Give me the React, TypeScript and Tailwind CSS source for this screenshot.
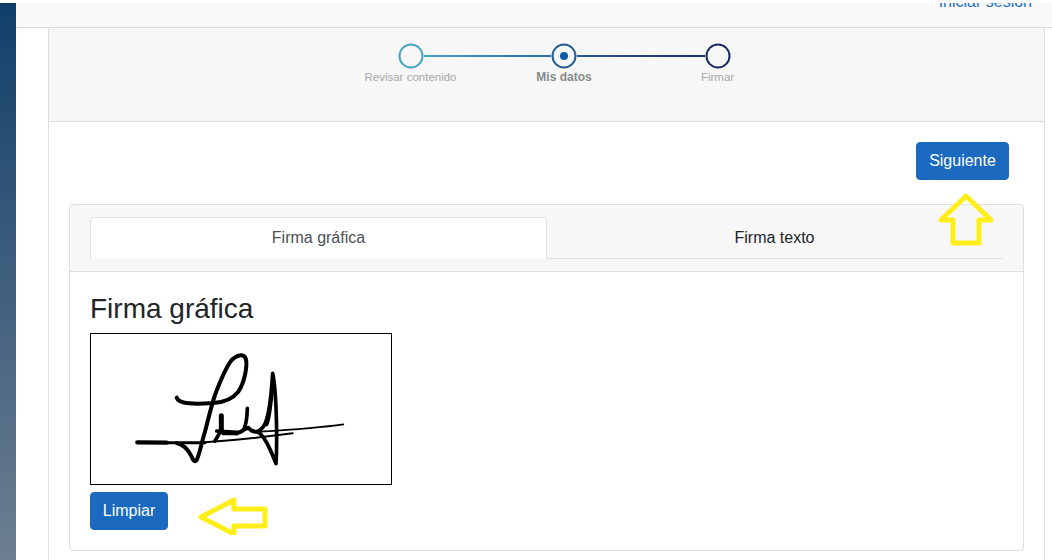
import React from "react";

function Sig() {
  return (
    <svg width="300" height="150" viewBox="33 27 900 450" className="block" fill="none" stroke="#000" strokeLinecap="round" strokeLinejoin="round">
      <path strokeWidth="12" d="M290 218 C296 238 345 238 400 234 C430 232 455 225 475 200 C495 170 503 120 497 100 C490 85 470 90 455 105 C435 130 420 170 405 210 C395 240 385 280 375 320 C365 350 360 385 350 405 C345 412 340 408 335 395 C325 375 310 358 290 354" />
      <path strokeWidth="13" d="M172 352 L260 353" />
      <path strokeWidth="9" d="M260 353 L375 353" />
      <path strokeWidth="6" d="M375 352 C470 345 560 335 638 325" />
      <path strokeWidth="5" d="M540 320 C620 315 720 308 790 298" />
      <path strokeWidth="15" d="M424 272 L424 320" />
      <path strokeWidth="11" d="M410 318 L470 322 C490 325 500 310 502 250" />
      <path strokeWidth="11" d="M405 348 L418 325" />
      <path strokeWidth="10" d="M430 326 L470 326" />
      <path strokeWidth="11" d="M470 326 L505 308 C518 325 535 325 550 305 C565 285 572 240 578 145 C590 200 592 350 588 416 C575 385 565 350 540 325 C530 320 515 318 505 310" />
      <path strokeWidth="9" d="M578 190 C572 240 570 285 560 300" />
    </svg>
  );
}

function Circle({ color, dot }: { color: string; dot?: boolean }) {
  return (
    <svg width="26" height="26" viewBox="0 0 26 26" className="block shrink-0">
      <circle cx="13" cy="13" r="11.5" fill="#f7f7f7" stroke={color} strokeWidth="2" />
      {dot && <circle cx="13" cy="13" r="4" fill="#0f5aa5" />}
    </svg>
  );
}

export default function App() {
  return (
    <div className="h-[560px] w-[1052px] overflow-hidden bg-white pt-[3px] flex font-['Liberation_Sans',Arial,sans-serif]">
      <div className="w-4 h-full shrink-0 bg-gradient-to-b from-[#0e3f6b] to-[#6c7f90]" />
      <div className="flex-1 flex flex-col min-w-0">
        <div className="h-[25px] shrink-0 bg-[#f8f8f8] border-b border-[#d9d9d9] overflow-hidden flex justify-end pr-5">
          <span className="text-[16px] leading-[24px] -mt-[13px] text-[#1b6ec2] h-[24px]">Iniciar sesión</span>
        </div>
        <div className="flex-1 ml-8 mr-[7px] border-x border-[#dfdfdf] min-h-0">
          <div className="h-[94px] bg-[#f7f7f7] border-b border-[#dcdcdc] flex flex-col items-center pt-[15px] pl-[35px]">
            <div className="flex items-center w-[333px]">
              <Circle color="#47a4c9" />
              <div className="h-[2px] flex-1 bg-gradient-to-r from-[#47a0c2] to-[#2b6c9e]" />
              <Circle color="#245c95" dot />
              <div className="h-[2px] flex-1 bg-gradient-to-r from-[#2b5a90] to-[#1a2d66]" />
              <Circle color="#1a2a63" />
            </div>
            <div className="flex w-[460px] mt-0 text-[11.5px] leading-[16px] text-[#a8a8a8]">
              <span className="w-[153px] text-center">Revisar contenido</span>
              <span className="w-[154px] text-center font-bold text-[12px] text-[#8a8a8a]">Mis datos</span>
              <span className="w-[153px] text-center">Firmar</span>
            </div>
          </div>
          <div className="px-5">
            <div className="flex justify-end pt-5 pr-[15px] pb-[24px]">
              <button className="relative h-[38px] w-[93px] rounded bg-[#1b6ac0] text-white text-[16px] leading-6 border border-[#1a68bb]">
                Siguiente
                <svg className="absolute left-[21px] top-[50px] pointer-events-none" width="58" height="56" viewBox="0 0 58 56" fill="none">
                  <path d="M28 3 L3 27 L15 27 L15 50 L41 50 L41 27 L53 27 Z" stroke="#ffee1a" strokeWidth="5" strokeLinejoin="round" />
                </svg>
              </button>
            </div>
            <div className="h-[347px] border border-[#dfdfdf] rounded">
              <div className="h-[67px] bg-[#f7f7f7] border-b border-[#dfdfdf] rounded-t pt-[11.5px] px-5">
                <div className="flex h-[43px] w-[912px] pt-[0.5px]">
                  <div className="w-[457px] h-[42px] pb-[1px] bg-white border-x border-t border-[#e2e2e2] rounded-t flex items-center justify-center text-[16px] text-[#495057]">
                    Firma gráfica
                  </div>
                  <div className="flex-1 h-[42px] border-b border-[#dedede] flex items-center justify-center text-[16px] text-[#212529]">
                    Firma texto
                  </div>
                </div>
              </div>
              <div className="px-5 pt-[20px]">
                <h2 className="text-[28px] leading-[34px] font-normal text-[#212529] mb-[7px]">Firma gráfica</h2>
                <div className="w-[302px] h-[152px] border border-black bg-white">
                  <Sig />
                </div>
                <button className="relative mt-[7px] h-[38px] w-[78px] rounded bg-[#1b6ac0] text-white text-[16px] leading-6 border border-[#1a68bb]">
                  Limpiar
                  <svg className="absolute left-[106px] top-[4px] pointer-events-none" width="72" height="38" viewBox="0 0 72 38" fill="none">
                    <path d="M4 20 L37 3 L37 12 L68 12 L68 29 L37 29 L37 37 Z" stroke="#ffee1a" strokeWidth="5" strokeLinejoin="round" />
                  </svg>
                </button>
              </div>
            </div>
          </div>
        </div>
      </div>
    </div>
  );
}
